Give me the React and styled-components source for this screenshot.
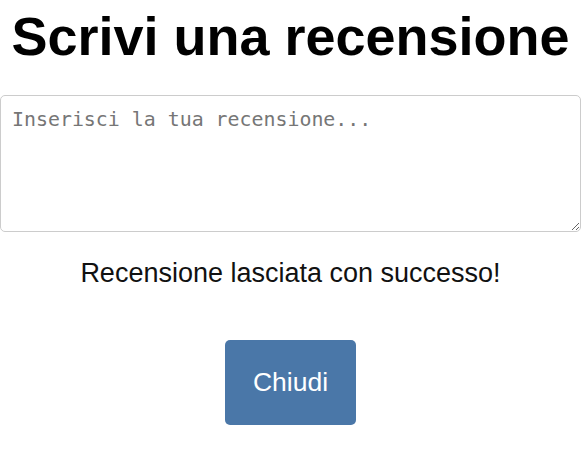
import React from "react";
import styled, { createGlobalStyle } from "styled-components";

const GlobalStyle = createGlobalStyle`
  html, body {
    margin: 0;
    padding: 0;
    background: #ffffff;
  }
  body {
    font-family: "Liberation Sans", Arial, sans-serif;
    color: #000;
  }
`;

const Page = styled.div`
  width: 581px;
  display: flex;
  flex-direction: column;
  align-items: center;
`;

const Title = styled.h1`
  margin: 5px 0 0;
  font-size: 54px;
  font-weight: bold;
  line-height: 62px;
  text-align: center;
`;

const ReviewInput = styled.textarea`
  box-sizing: border-box;
  width: 581px;
  height: 137px;
  margin-top: 28px;
  padding: 12px 11px 10px;
  border: 1px solid #cccccc;
  border-radius: 5px;
  font-family: "DejaVu Sans Mono", "Liberation Mono", monospace;
  font-size: 19.9px;
  line-height: 24px;
  color: #333;
  resize: vertical;
  outline: none;

  &::placeholder {
    color: #767676;
  }
`;

const Message = styled.p`
  margin: 26px 0 0;
  font-size: 27px;
  line-height: 31px;
  color: #111;
  text-align: center;
`;

const CloseButton = styled.button`
  margin-top: 51px;
  width: 131px;
  height: 85px;
  border: none;
  border-radius: 5px;
  background-color: #4a77a8;
  color: #ffffff;
  font-family: "Liberation Sans", Arial, sans-serif;
  font-size: 26.5px;
  cursor: pointer;
`;

const App = () => {
  return (
    <>
      <GlobalStyle />
      <Page>
        <Title>Scrivi una recensione</Title>
        <ReviewInput placeholder="Inserisci la tua recensione..." />
        <Message>Recensione lasciata con successo!</Message>
        <CloseButton>Chiudi</CloseButton>
      </Page>
    </>
  );
};

export default App;
